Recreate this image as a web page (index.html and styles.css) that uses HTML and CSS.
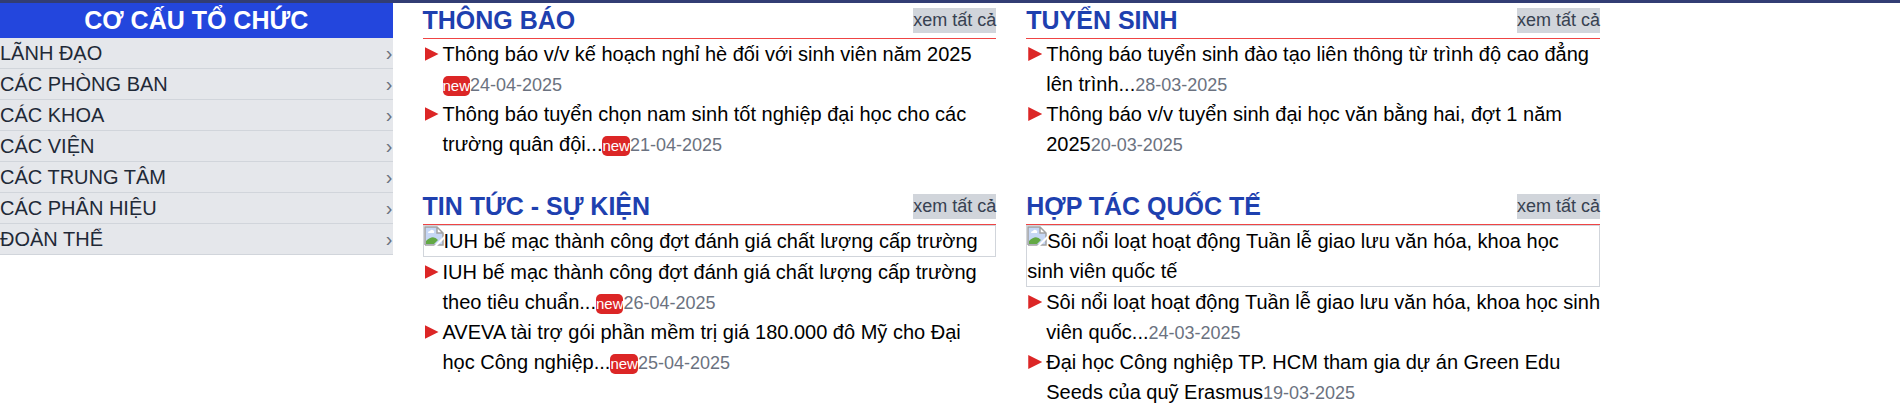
FILE: index.html
```html
<!DOCTYPE html>
<html lang="vi">
<head>
<meta charset="utf-8">
<title>Thông báo - Tin tức</title>
<link rel="stylesheet" href="styles.css">
</head>
<body>
<svg class="defs" width="0" height="0" aria-hidden="true">
  <symbol id="picture" viewBox="0 0 20 20">
    <path d="M1 1H13L19 7V19H1Z" fill="#c6d7f5"/>
    <path d="M2 18V15Q9 8 14 14L10 18Z" fill="#63a945"/>
    <path d="M4 7Q4 5 6 5Q7 3 9 4Q11 5 10 7Z" fill="#fff"/>
    <path d="M13 1V7H19Z" fill="#fff"/>
    <path d="M1 19V1H13L19 7V19H1M13 1V7H19" fill="none" stroke="#a3a3a3" stroke-width="1.5"/>
    <path d="M10 20L20 10V13L13 20Z" fill="#fff"/>
  </symbol>
</svg>
<div class="page">
  <nav class="sidebar" aria-labelledby="org">
    <h2 class="sidebar-title" id="org">CƠ CẤU TỔ CHỨC</h2>
    <ul class="menu">
      <li><a class="menu-link" href="#">LÃNH ĐẠO<span class="chevron">›</span></a></li>
      <li><a class="menu-link" href="#">CÁC PHÒNG BAN<span class="chevron">›</span></a></li>
      <li><a class="menu-link" href="#">CÁC KHOA<span class="chevron">›</span></a></li>
      <li><a class="menu-link" href="#">CÁC VIỆN<span class="chevron">›</span></a></li>
      <li><a class="menu-link" href="#">CÁC TRUNG TÂM<span class="chevron">›</span></a></li>
      <li><a class="menu-link" href="#">CÁC PHÂN HIỆU<span class="chevron">›</span></a></li>
      <li><a class="menu-link" href="#">ĐOÀN THỂ<span class="chevron">›</span></a></li>
    </ul>
  </nav>
  <main class="sections">
    <section>
      <header class="section-head"><h2 class="section-title">THÔNG BÁO</h2><a class="more" href="#">xem tất cả</a></header>
      <ul class="news">
        <li class="news-item"><a href="#">Thông báo v/v kế hoạch nghỉ hè đối với sinh viên năm 2025</a> <span class="badge">new</span><time class="date">24-04-2025</time></li>
        <li class="news-item"><a href="#">Thông báo tuyển chọn nam sinh tốt nghiệp đại học cho các trường quân đội...</a><span class="badge">new</span><time class="date">21-04-2025</time></li>
      </ul>
    </section>
    <section>
      <header class="section-head"><h2 class="section-title">TUYỂN SINH</h2><a class="more" href="#">xem tất cả</a></header>
      <ul class="news">
        <li class="news-item"><a href="#">Thông báo tuyển sinh đào tạo liên thông từ trình độ cao đẳng lên trình...</a><time class="date">28-03-2025</time></li>
        <li class="news-item"><a href="#">Thông báo v/v tuyển sinh đại học văn bằng hai, đợt 1 năm 2025</a><time class="date">20-03-2025</time></li>
      </ul>
    </section>
    <section>
      <header class="section-head"><h2 class="section-title">TIN TỨC - SỰ KIỆN</h2><a class="more" href="#">xem tất cả</a></header>
      <a class="thumb" href="#"><svg class="thumb-icon" aria-hidden="true"><use href="#picture"/></svg>IUH bế mạc thành công đợt đánh giá chất lượng cấp trường</a>
      <ul class="news">
        <li class="news-item"><a href="#">IUH bế mạc thành công đợt đánh giá chất lượng cấp trường theo tiêu chuẩn...</a><span class="badge">new</span><time class="date">26-04-2025</time></li>
        <li class="news-item"><a href="#">AVEVA tài trợ gói phần mềm trị giá 180.000 đô Mỹ cho Đại học Công nghiệp...</a><span class="badge">new</span><time class="date">25-04-2025</time></li>
      </ul>
    </section>
    <section>
      <header class="section-head"><h2 class="section-title">HỢP TÁC QUỐC TẾ</h2><a class="more" href="#">xem tất cả</a></header>
      <a class="thumb" href="#"><svg class="thumb-icon" aria-hidden="true"><use href="#picture"/></svg>Sôi nổi loạt hoạt động Tuần lễ giao lưu văn hóa, khoa học sinh viên quốc tế</a>
      <ul class="news">
        <li class="news-item"><a href="#">Sôi nổi loạt hoạt động Tuần lễ giao lưu văn hóa, khoa học sinh viên quốc...</a><time class="date">24-03-2025</time></li>
        <li class="news-item"><a href="#">Đại học Công nghiệp TP. HCM tham gia dự án Green Edu Seeds của quỹ Erasmus</a><time class="date">19-03-2025</time></li>
      </ul>
    </section>
  </main>
</div>
</body>
</html>
```
FILE: styles.css
```css
* { box-sizing: border-box; margin: 0; padding: 0; }

body {
  border-top: 3px solid #323d74;
  background: #fff;
  color: #000;
  font: 20px/30px "Liberation Sans", Arial, sans-serif;
}

a { color: inherit; text-decoration: none; }
ul { list-style: none; }
.defs { position: absolute; }

.page {
  display: grid;
  grid-template-columns: minmax(0, 1fr) minmax(0, 3fr);
  gap: 30px;
  align-items: start;
  max-width: 1600px;
}

.sidebar-title {
  background: #2346dd;
  color: #fff;
  font-size: 25px;
  line-height: 35px;
  text-align: center;
}
.menu-link {
  display: flex;
  justify-content: space-between;
  border-bottom: 1px solid #d1d5db;
  background: #e5e7eb;
  color: #1f2937;
}
.chevron { color: #6b7280; }

.sections {
  display: grid;
  grid-template-columns: repeat(2, minmax(0, 1fr));
  gap: 30px;
}
.section-head {
  display: flex;
  justify-content: space-between;
  align-items: center;
  border-bottom: 1px solid #ef4444;
}
.section-title {
  color: #1e40af;
  font-size: 25px;
  line-height: 35px;
}
.more {
  background: #d1d5db;
  color: #374151;
  font-size: 18px;
  line-height: 25px;
}

.thumb {
  display: block;
  border: 1px solid #d1d5db;
}
.thumb-icon {
  float: left;
  width: 20px;
  height: 20px;
}

.news { margin-right: -1px; }
.news-item { padding-left: 20px; }
.news-item::before {
  content: "";
  display: inline-block;
  width: 14px;
  height: 14px;
  margin: 0 4px 0 -18px;
  background: #dc2626;
  clip-path: polygon(0 0, 100% 50%, 0 100%);
}
.badge {
  display: inline-block;
  border-radius: 5px;
  background: #dc2626;
  color: #fff;
  font-size: 15px;
  line-height: 20px;
}
.date {
  color: #6b7280;
  font-size: 18px;
  line-height: 25px;
}
```
